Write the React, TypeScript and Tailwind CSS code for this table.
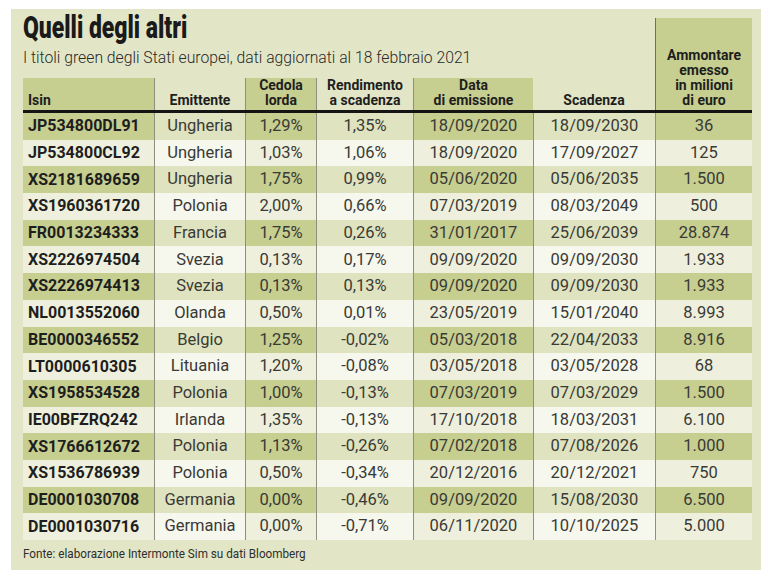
import React from "react";

const rows: string[][] = [
  ["JP534800DL91", "Ungheria", "1,29%", "1,35%", "18/09/2020", "18/09/2030", "36"],
  ["JP534800CL92", "Ungheria", "1,03%", "1,06%", "18/09/2020", "17/09/2027", "125"],
  ["XS2181689659", "Ungheria", "1,75%", "0,99%", "05/06/2020", "05/06/2035", "1.500"],
  ["XS1960361720", "Polonia", "2,00%", "0,66%", "07/03/2019", "08/03/2049", "500"],
  ["FR0013234333", "Francia", "1,75%", "0,26%", "31/01/2017", "25/06/2039", "28.874"],
  ["XS2226974504", "Svezia", "0,13%", "0,17%", "09/09/2020", "09/09/2030", "1.933"],
  ["XS2226974413", "Svezia", "0,13%", "0,13%", "09/09/2020", "09/09/2030", "1.933"],
  ["NL0013552060", "Olanda", "0,50%", "0,01%", "23/05/2019", "15/01/2040", "8.993"],
  ["BE0000346552", "Belgio", "1,25%", "-0,02%", "05/03/2018", "22/04/2033", "8.916"],
  ["LT0000610305", "Lituania", "1,20%", "-0,08%", "03/05/2018", "03/05/2028", "68"],
  ["XS1958534528", "Polonia", "1,00%", "-0,13%", "07/03/2019", "07/03/2029", "1.500"],
  ["IE00BFZRQ242", "Irlanda", "1,35%", "-0,13%", "17/10/2018", "18/03/2031", "6.100"],
  ["XS1766612672", "Polonia", "1,13%", "-0,26%", "07/02/2018", "07/08/2026", "1.000"],
  ["XS1536786939", "Polonia", "0,50%", "-0,34%", "20/12/2016", "20/12/2021", "750"],
  ["DE0001030708", "Germania", "0,00%", "-0,46%", "09/09/2020", "15/08/2030", "6.500"],
  ["DE0001030716", "Germania", "0,00%", "-0,71%", "06/11/2020", "10/10/2025", "5.000"],
];

const highlight = [true, false, true, false, true, false, true];

function Row({ cells, odd }: { cells: string[]; odd: boolean }) {
  return (
    <div className="grid grid-cols-[131px_91px_71px_97px_120px_122px_97px] h-[26.69px]">
      {cells.map((c, i) => {
        const hi = highlight[i];
        const bg = odd
          ? hi
            ? "bg-[#c6ce90]"
            : "bg-[#dfe3bf]"
          : hi
          ? "bg-[#eef0dd]"
          : "bg-[#f6f7ed]";
        const border = i === 0 ? "" : "border-l border-[#8e8f7c]";
        const text =
          i === 0
            ? "justify-start pl-[5px] font-bold text-[#1e1e1e] text-[16px]"
            : "justify-center text-[#3a3a36] text-[16.5px]";
        return (
          <div key={i} className={`flex items-center ${bg} ${border} ${text} leading-none`}>
            {c}
          </div>
        );
      })}
    </div>
  );
}

const hdr = "text-[14px] leading-[15px] font-bold text-[#1e1e1e]";

export default function App() {
  return (
    <div className="w-[775px] h-[579px] bg-white pt-[9px] pl-[11px] font-['Roboto',sans-serif]">
      <div className="w-[750px] h-[561px] bg-[#e3e6c6] pt-[9px] pl-[12px] flex flex-col">
        <div className="grid grid-cols-[131px_91px_71px_97px_120px_122px_97px] grid-rows-[60px_32px] w-[729px]">
          <div className="col-span-6 flex flex-col">
            <div className="text-[31px] leading-[26px] font-black text-[#1a1a1a] -mt-[3px] scale-x-[0.74] origin-left whitespace-nowrap">
              Quelli degli altri
            </div>
            <div className="text-[17px] leading-[20px] font-light text-[#2a2a2a] mt-[6px] whitespace-nowrap scale-x-[0.925] origin-left">
              I titoli green degli Stati europei, dati aggiornati al 18 febbraio 2021
            </div>
          </div>
          <div className={`row-span-2 bg-[#c6ce90] border-l border-[#6f705f] flex flex-col justify-end items-center text-center pb-[2px] ${hdr}`}>
            <div>Ammontare</div>
            <div>emesso</div>
            <div>in milioni</div>
            <div>di euro</div>
          </div>
          <div className={`bg-[#c6ce90] flex items-end pl-[5px] pb-[2px] ${hdr}`}>Isin</div>
          <div className={`border-l border-[#8e8f7c] flex items-end justify-center pb-[2px] ${hdr}`}>Emittente</div>
          <div className={`bg-[#c6ce90] border-l border-[#8e8f7c] flex flex-col justify-end items-center pb-[2px] ${hdr}`}>
            <div>Cedola</div>
            <div>lorda</div>
          </div>
          <div className={`border-l border-[#8e8f7c] flex flex-col justify-end items-center pb-[2px] ${hdr}`}>
            <div>Rendimento</div>
            <div>a scadenza</div>
          </div>
          <div className={`bg-[#c6ce90] border-l border-[#8e8f7c] flex flex-col justify-end items-center pb-[2px] ${hdr}`}>
            <div>Data</div>
            <div>di emissione</div>
          </div>
          <div className={`flex items-end justify-center pb-[2px] ${hdr}`}>Scadenza</div>
        </div>
        <div className="w-[729px] h-[3px] bg-[#141414]" />
        <div className="w-[729px] flex flex-col">
          {rows.map((r, i) => (
            <Row key={i} cells={r} odd={i % 2 === 0} />
          ))}
        </div>
        <div className="mt-[6px] text-[13px] leading-[16px] text-[#2e2e2e] whitespace-nowrap scale-x-[0.9] origin-left">
          Fonte: elaborazione Intermonte Sim su dati Bloomberg
        </div>
      </div>
    </div>
  );
}
